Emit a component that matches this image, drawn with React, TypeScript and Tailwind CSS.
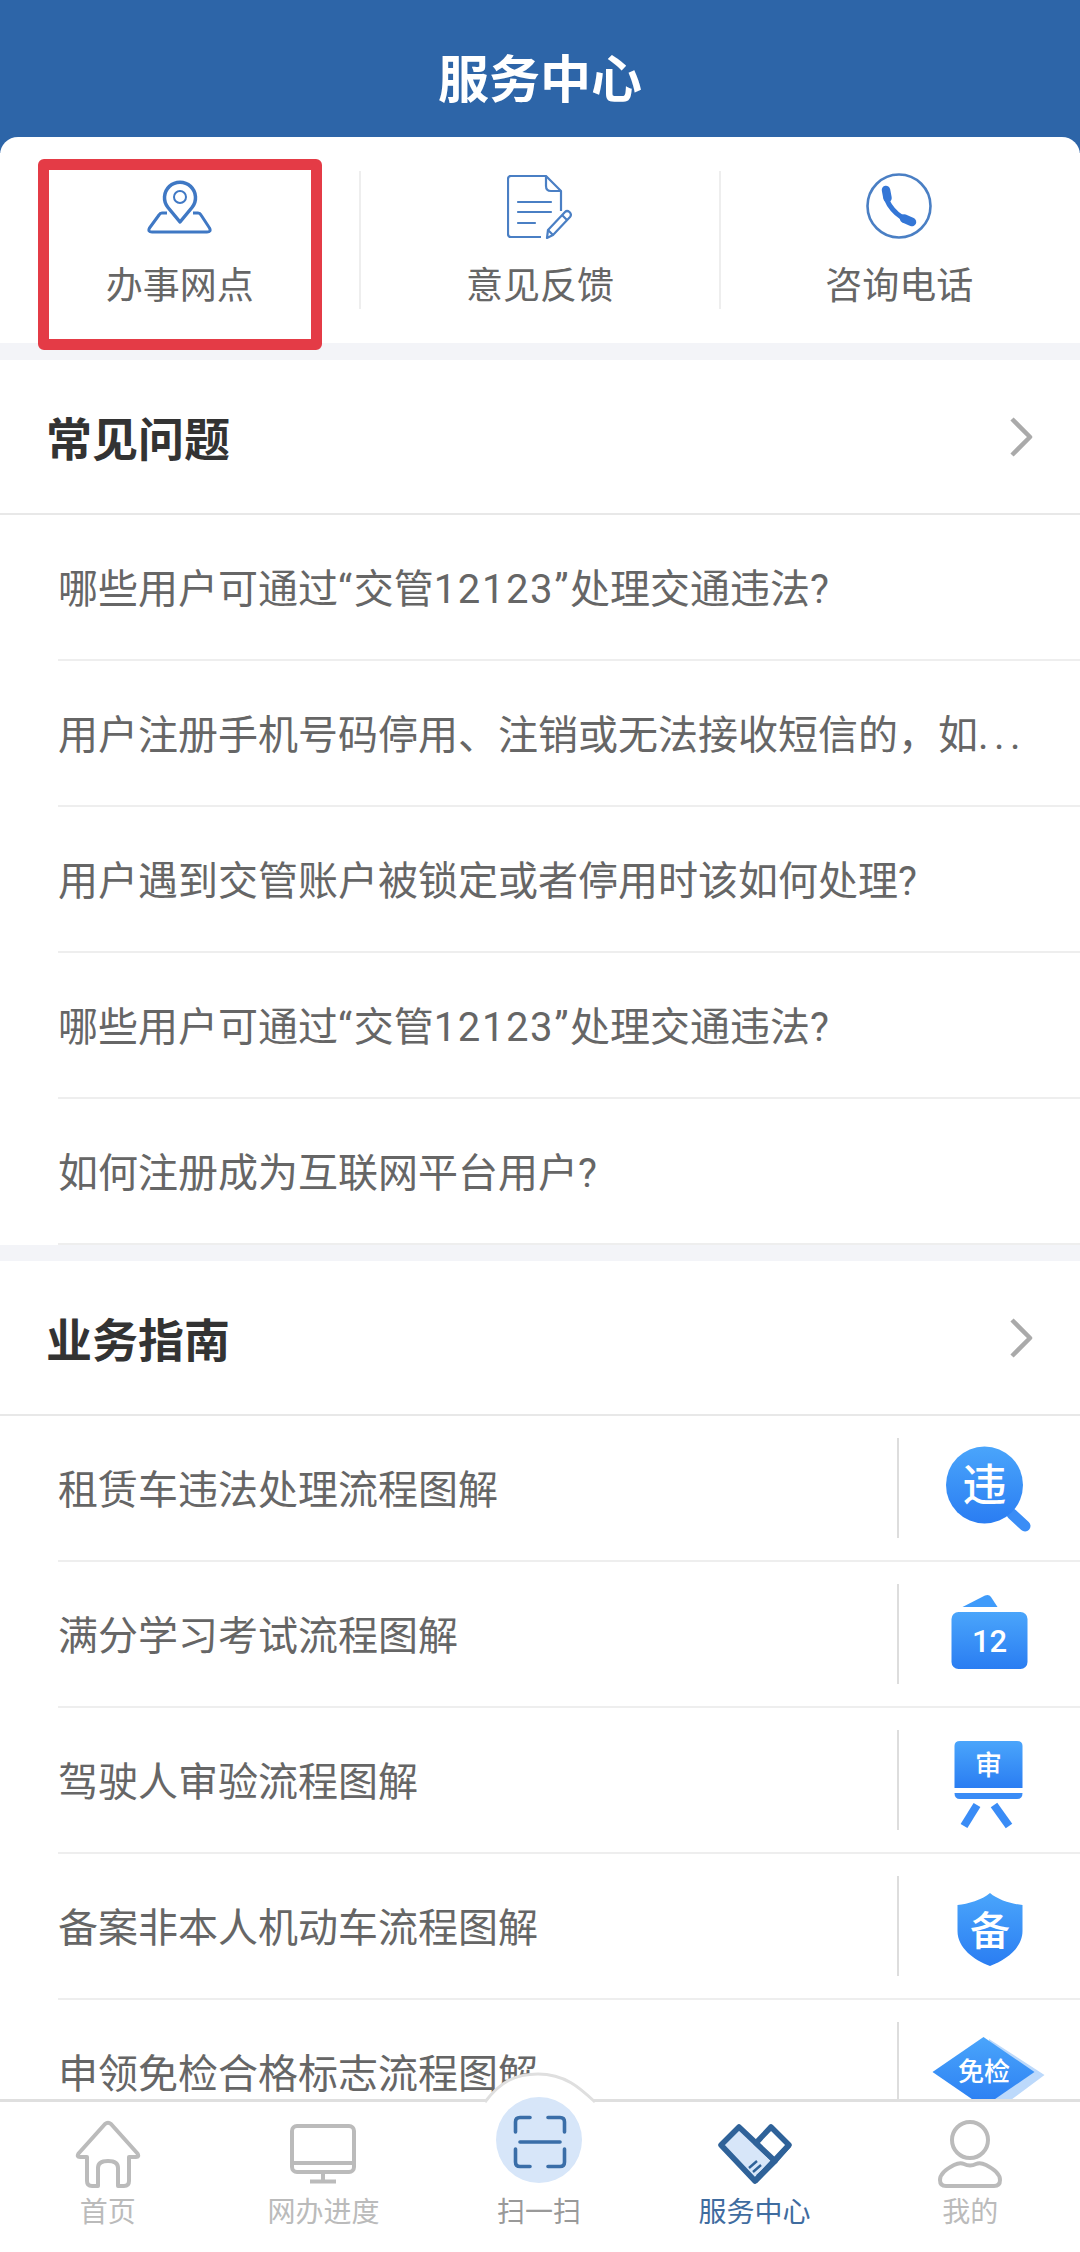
const Num = ({ children }: { children: string }) => <span className="tracking-[1.6px]">{children}</span>

const questions = [
  <>哪些用户可通过<Num>“</Num>交管<Num>12123”</Num>处理交通违法?</>,
  <>{"用户注册手机号码停用、注销或无法接收短信的\uFF0C如"}<span className="tracking-[5.5px]">...</span></>,
  <>用户遇到交管账户被锁定或者停用时该如何处理?</>,
  <>哪些用户可通过<Num>“</Num>交管<Num>12123”</Num>处理交通违法?</>,
  <>如何注册成为互联网平台用户?</>,
]

const Chevron = () => (
  <svg width="24" height="40" viewBox="0 0 24 40" fill="none">
    <path d="M3 2 L21 20 L3 38" stroke="#aaaaaa" strokeWidth="4.5" strokeLinejoin="round" />
  </svg>
)

const SectionHeader = ({ title }: { title: string }) => (
  <div className="flex h-[155px] items-center justify-between border-b-2 border-[#e8e8e8] pl-[46px] pr-[47px]">
    <span className="pt-[7px] text-[46px] font-bold leading-[50px] text-[#333333]">{title}</span>
    <Chevron />
  </div>
)

const Grad = ({ id }: { id: string }) => (
  <defs>
    <linearGradient id={id} x1="0" y1="0" x2="0" y2="1">
      <stop offset="0" stopColor="#4aa5fb" />
      <stop offset="1" stopColor="#2a7df2" />
    </linearGradient>
  </defs>
)

const WeiIcon = () => (
  <svg width="120" height="120" viewBox="0 0 120 120">
    <Grad id="g1" />
    <path d="M84 86 L97 98" stroke="#3a8df6" strokeWidth="11" strokeLinecap="round" />
    <circle cx="56.5" cy="57" r="38.5" fill="url(#g1)" />
    <text x="56.5" y="73" textAnchor="middle" fontSize="44" fontWeight="500" fill="#fff">违</text>
  </svg>
)

const ManIcon = () => (
  <svg width="120" height="120" viewBox="0 0 120 120">
    <Grad id="g2" />
    <path d="M34.5 33 L57 21.5 Q61 20 63 23 L69.5 33 Z" fill="#3f9bfa" />
    <rect x="23.5" y="38" width="76" height="57" rx="7" fill="url(#g2)" />
    <text x="61.5" y="78" textAnchor="middle" fontSize="31" fontWeight="500" fill="#fff">12</text>
  </svg>
)

const ShenIcon = () => (
  <svg width="120" height="120" viewBox="0 0 120 120">
    <Grad id="g3" />
    <path d="M32 21 H89 Q94.5 21 94.5 26 V68 H26.5 V26 Q26.5 21 32 21 Z" fill="url(#g3)" />
    <path d="M26.5 73 H94.5 Q94.5 79 89 79 H32 Q26.5 79 26.5 73 Z" fill="#3a8cf6" />
    <path d="M49 85 L36 106" stroke="#3a8cf6" strokeWidth="8" />
    <path d="M66 85 L81 106" stroke="#3a8cf6" strokeWidth="8" />
    <text x="60.5" y="55" textAnchor="middle" fontSize="27" fontWeight="500" fill="#fff">审</text>
  </svg>
)

const BeiIcon = () => (
  <svg width="120" height="120" viewBox="0 0 120 120">
    <Grad id="g4" />
    <path
      d="M62 27 C70 34 84 38 94.5 39 V65 C94.5 82 78 94 62 100 C46 94 29.5 82 29.5 65 V39 C40 38 54 34 62 27 Z"
      fill="url(#g4)"
    />
    <text x="62" y="79" textAnchor="middle" fontSize="40" fontWeight="500" fill="#fff">备</text>
  </svg>
)

const MianIcon = () => (
  <svg width="120" height="120" viewBox="0 0 120 120">
    <Grad id="g5" />
    <path d="M61 27 L116.5 63 L72 96 H60 Z" fill="#bcd9fb" />
    <path d="M55.5 25 L106.5 60 L55.5 95 L4.5 60 Z" fill="url(#g5)" />
    <text x="56" y="69" textAnchor="middle" fontSize="26" fontWeight="500" fill="#fff">免检</text>
  </svg>
)

const guides = [
  { title: "租赁车违法处理流程图解", icon: <WeiIcon /> },
  { title: "满分学习考试流程图解", icon: <ManIcon /> },
  { title: "驾驶人审验流程图解", icon: <ShenIcon /> },
  { title: "备案非本人机动车流程图解", icon: <BeiIcon /> },
  { title: "申领免检合格标志流程图解", icon: <MianIcon /> },
]

const PinIcon = () => (
  <svg width="65" height="55" viewBox="0 0 65 55" fill="none" stroke="#3f78c4" strokeWidth="3" strokeLinejoin="round">
    <path d="M20 34 H15 Q13 34 12 36 L2.5 49 Q0.5 53 5 53 H60 Q64.5 53 62.5 49 L54 36 Q53 34 51 34 H46" />
    <path d="M33 43 L21 28.5 A15.5 15.5 0 1 1 45 28.5 Z" strokeWidth="3.5" />
    <circle cx="33" cy="18" r="6" strokeWidth="2" />
  </svg>
)

const DocIcon = () => (
  <svg width="65" height="64" viewBox="0 0 65 64" fill="none" stroke="#4a7fc4" strokeWidth="2.2" strokeLinejoin="round">
    <path d="M34 62 H4 Q1 62 1 59 V4 Q1 1 4 1 H39 L54 16 V36" />
    <path d="M39 1 V11 Q39 16 44 16 H54" />
    <path d="M11 27 H44 M11 37 H44 M11 48 H28" strokeLinecap="round" />
    <path d="M40 63 L41 55 L58 37 Q60 35 62.5 37 Q65 39.5 63 42 L46 60 Z" />
    <path d="M41 55 L46 60 M55 40 L60 45" />
  </svg>
)

const PhoneIcon = () => (
  <svg width="66" height="66" viewBox="0 0 66 66" fill="none">
    <circle cx="33" cy="33" r="31.5" stroke="#4a7fc4" strokeWidth="2.6" />
    <path d="M19.5 19 C19 30 31 45 44 47" stroke="#3476d6" strokeWidth="5" />
    <path d="M20 17 L21.5 25" stroke="#3476d6" strokeWidth="8.5" strokeLinecap="round" />
    <path d="M38 45.5 L46 49" stroke="#3476d6" strokeWidth="8.5" strokeLinecap="round" />
  </svg>
)

const HomeIcon = () => (
  <svg width="66" height="68" viewBox="0 0 66 68" fill="none" stroke="#bbbbbb" strokeWidth="4" strokeLinejoin="round">
    <path d="M12 37 H5 Q1.5 37 3.5 33.5 L30 4 Q33 1.5 36 4 L62.5 33.5 Q64.5 37 61 37 H54 V61 Q54 66 49 66 H43 V48 Q43 41 33 41 Q23 41 23 48 V66 H17 Q12 66 12 61 Z" />
  </svg>
)

const MonitorIcon = () => (
  <svg width="66" height="60" viewBox="0 0 66 60" fill="none" stroke="#bbbbbb" strokeWidth="4">
    <rect x="2" y="2" width="62" height="46" rx="5" />
    <path d="M2 39 H64 M33 48 V57 M20 57.5 H46" />
  </svg>
)

const ScanIcon = () => (
  <svg width="86" height="86" viewBox="0 0 86 86" fill="none">
    <circle cx="43" cy="43" r="43" fill="#d7e6f9" />
    <g stroke="#3a6ea8" strokeWidth="3.6" strokeLinecap="round">
      <path d="M34 20.5 H24 Q19.5 20.5 19.5 25 V35" />
      <path d="M52 20.5 H64 Q68.5 20.5 68.5 25 V35" />
      <path d="M19.5 52 V65 Q19.5 69.5 24 69.5 H34" />
      <path d="M68.5 52 V65 Q68.5 69.5 64 69.5 H52" />
      <path d="M24 45 H64" />
    </g>
  </svg>
)

const HeartIcon = () => (
  <svg width="74" height="62" viewBox="0 0 74 62" fill="none" stroke="#2f6299" strokeWidth="5.5" strokeLinejoin="round">
    <path d="M21 4 L3 22 L37 58 L57 38 L21 4 Z" fill="#d7e6f9" />
    <path d="M38 20 L53 4 L71 22 L57 38 Z" fill="#ffffff" />
    <path d="M37 58 L71 22" />
    <path d="M31 45 L39 38 M35 49 L43 42 M39 53 L47 46" strokeWidth="2.4" />
  </svg>
)

const UserIcon = () => (
  <svg width="64" height="68" viewBox="0 0 64 68" fill="none" stroke="#bbbbbb" strokeWidth="4">
    <circle cx="32" cy="20" r="18" />
    <path d="M8 66 H56 Q62 66 62 60 Q62 52 48 45 Q42 42 38 44 Q32 47 26 44 Q22 42 16 45 Q2 52 2 60 Q2 66 8 66 Z" />
  </svg>
)

const NavItem = ({ icon, label, color }: { icon: React.ReactNode; label: string; color: string }) => (
  <div className="flex flex-col items-center">
    <div className="flex h-[72px] items-center justify-center">{icon}</div>
    <span className={`mt-[8px] text-[28px] leading-[30px] ${color}`}>{label}</span>
  </div>
)

export default function App() {
  return (
    <div className="relative h-[2252px] w-[1080px] overflow-hidden bg-white font-['Roboto','Noto_Sans_CJK_SC',sans-serif]">
      {/* Header */}
      <div className="flex h-[153px] justify-center bg-[#2d65a8] pt-[52px]">
        <span className="text-[51px] font-bold leading-[58px] text-white">服务中心</span>
      </div>

      {/* Shortcuts */}
      <div className="relative -mt-[16px] h-[206px] rounded-t-[18px] bg-white pt-[34px]">
        <div className="grid grid-cols-3 pr-[2px]">
          <div className="flex h-[138px] flex-col items-center pt-[8px]">
            <div className="flex h-[62px] items-start"><PinIcon /></div>
            <span className="mt-[26px] text-[37px] leading-[40px] text-[#666666]">办事网点</span>
          </div>
          <div className="flex h-[138px] flex-col items-center border-l-2 border-[#eeeeee] pt-[4px]">
            <div className="flex h-[66px] items-start"><DocIcon /></div>
            <span className="mt-[26px] text-[37px] leading-[40px] text-[#666666]">意见反馈</span>
          </div>
          <div className="flex h-[138px] flex-col items-center border-l-2 border-[#eeeeee] pt-[2px]">
            <div className="flex h-[68px] items-start"><PhoneIcon /></div>
            <span className="mt-[26px] text-[37px] leading-[40px] text-[#666666]">咨询电话</span>
          </div>
        </div>
      </div>
      <div className="h-[17px] bg-[#f3f4f8]" />

      {/* 常见问题 */}
      <SectionHeader title="常见问题" />
      {questions.map((q, i) => (
        <div key={i} className="ml-[58px] flex h-[146px] items-center border-b-2 border-[#eeeeee] pr-[58px] last:border-b-0">
          <span className="whitespace-nowrap pt-[6px] text-[40px] leading-[48px] text-[#666666]">{q}</span>
        </div>
      ))}
      <div className="h-[16px] bg-[#f3f4f8]" />

      {/* 业务指南 */}
      <SectionHeader title="业务指南" />
      {guides.map((g) => (
        <div key={g.title} className="ml-[58px] flex h-[146px] items-center border-b-2 border-[#eeeeee]">
          <span className="flex-1 pt-[6px] text-[40px] leading-[48px] text-[#666666]">{g.title}</span>
          <div className="flex h-[100px] w-[183px] items-center justify-center border-l-2 border-[#dddddd] pr-[3px]">{g.icon}</div>
        </div>
      ))}

      {/* Tab bar */}
      <div className="absolute bottom-0 left-0 right-0 h-[153px] border-t-[3px] border-[#dfdfdf] bg-white">
        <svg className="absolute left-[480px] -top-[32px]" width="120" height="36" viewBox="0 0 120 36" fill="none">
          <path d="M5 32 C20 12 35 4 58 4 C85 4 100 18 115 32 V36 H5 Z" fill="#ffffff" />
          <path d="M5 32 C20 12 35 4 58 4 C85 4 100 18 115 32" stroke="#dfdfdf" strokeWidth="3" />
        </svg>
        <div className="relative grid grid-cols-5 pr-[2px] pt-[16px]">
          <NavItem icon={<HomeIcon />} label="首页" color="text-[#bbbbbb]" />
          <NavItem icon={<MonitorIcon />} label="网办进度" color="text-[#bbbbbb]" />
          <div className="flex flex-col items-center">
            <div className="-mt-[21px] h-[93px]"><ScanIcon /></div>
            <span className="mt-[8px] text-[28px] leading-[30px] text-[#999999]">扫一扫</span>
          </div>
          <NavItem icon={<HeartIcon />} label="服务中心" color="text-[#3f6c9f]" />
          <NavItem icon={<UserIcon />} label="我的" color="text-[#bbbbbb]" />
        </div>
      </div>

      {/* Red annotation box */}
      <div className="absolute left-[38px] top-[159px] h-[191px] w-[284px] rounded-[6px] border-[11px] border-[#e43b46]" />
    </div>
  )
}
